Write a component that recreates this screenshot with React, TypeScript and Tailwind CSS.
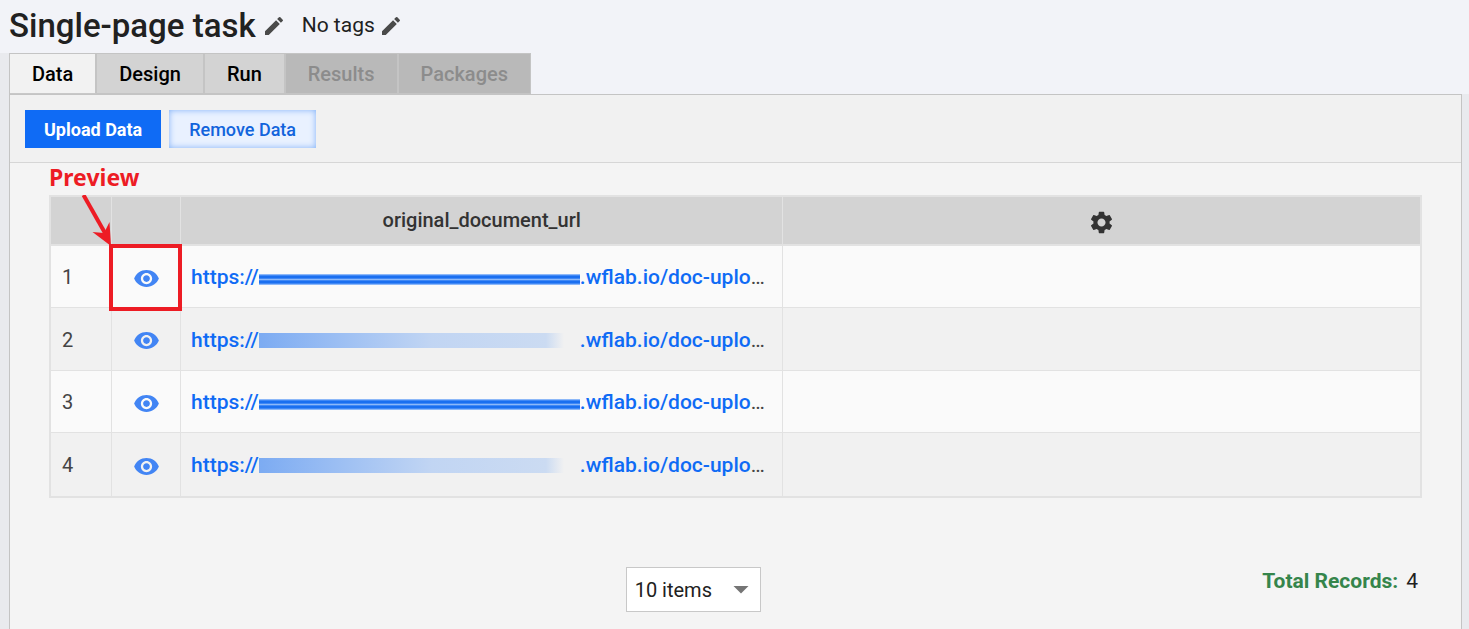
import { useState } from 'react';
import { MdArrowDropDown, MdEdit, MdSettings, MdVisibility } from 'react-icons/md';

interface TaskRecord {
  id: number;
  mask: 'striped' | 'faded';
}

const tabs = [
  { name: 'Data', enabled: true },
  { name: 'Design', enabled: true },
  { name: 'Run', enabled: true },
  { name: 'Results', enabled: false },
  { name: 'Packages', enabled: false },
];

const records: TaskRecord[] = [
  { id: 1, mask: 'striped' },
  { id: 2, mask: 'faded' },
  { id: 3, mask: 'striped' },
  { id: 4, mask: 'faded' },
];

function tabClass(name: string, enabled: boolean, active: string) {
  if (!enabled) return 'bg-[#b9b9b9] text-[#8c8c8c] border-b border-b-[#c4c4c4]';
  if (name === active) return 'bg-[#f2f2f2] text-black border-b border-b-[#c8c8c8]';
  return 'bg-[#d3d3d3] text-black border-b border-b-[#c4c4c4]';
}

// Hides the private part of the host name
function Mask({ kind }: { kind: TaskRecord['mask'] }) {
  if (kind === 'striped') {
    return (
      <span className="mt-[3px] flex h-[11px] w-[321px] flex-col gap-px bg-[#8db8f8] py-px">
        <span className="h-[4px] border-y border-[#4088f5] bg-[#1a6ff0]" />
        <span className="h-[4px] border-y border-[#4088f5] bg-[#1a6ff0]" />
      </span>
    );
  }
  return (
    <span className="flex h-[15px] w-[321px]">
      <span className="w-[287px] bg-linear-to-r from-[#7cabf2] via-[#c1d5f3] via-60% to-[#cbdbf2]" />
      <span className="w-[18px] bg-linear-to-r from-[#cbdbf2] to-[#cbdbf200]" />
    </span>
  );
}

export default function App() {
  const [active, setActive] = useState('Data');
  const [pageSize, setPageSize] = useState('10');

  return (
    <div className="flex min-h-screen flex-col bg-[#e9eaee] font-[Roboto,sans-serif] text-xl text-[#212121]">
      {/* Task title */}
      <header className="flex h-[53px] items-center bg-[#f2f3f8] px-[9px] pb-[2px]">
        <h1 className="text-[33px] leading-10 font-medium">Single-page task</h1>
        <button aria-label="Edit name" className="ml-[6px] text-[#4a4a4a]">
          <MdEdit size={24} />
        </button>
        <span className="ml-4 text-[21px]">No tags</span>
        <button aria-label="Edit tags" className="ml-1 text-[#4a4a4a]">
          <MdEdit size={24} />
        </button>
      </header>

      <nav className="ml-[9px] flex h-[41px] bg-[#f2f3f8]">
        <div className="flex divide-x-2 divide-[#c4c4c4] border-x border-t border-[#c4c4c4]">
          {tabs.map((tab) => (
            <button
              key={tab.name}
              disabled={!tab.enabled}
              onClick={() => setActive(tab.name)}
              className={`px-[22px] font-medium ${tabClass(tab.name, tab.enabled, active)}`}
            >
              {tab.name}
            </button>
          ))}
        </div>
      </nav>

      <main className="mr-[7px] ml-[9px] flex-1 border-x border-t border-[#c4c4c4] bg-[#f4f4f4]">
        <div className="flex gap-2 border-b border-[#d6d6d6] bg-[#f1f1f1] px-[15px] pt-[15px] pb-[14px] text-lg leading-9">
          <button className="bg-[#0f6bf5] px-[19px] pt-[2px] font-bold text-white">Upload Data</button>
          <button className="bg-[#e9f1ff] px-5 pt-[2px] font-medium text-[#1264dc] shadow-[inset_0_0_6px_#7fb0f8]">
            Remove Data
          </button>
        </div>

        {/* Records */}
        <div className="relative px-[39px] pt-8">
          <table className="w-full table-fixed border-separate border-spacing-0 border-2 border-[#e2e2e2]">
            <thead>
              <tr className="h-[49px] bg-[#d3d3d3] text-[#333]">
                <th className="w-[61px] border-r border-b-2 border-[#e2e2e2]" />
                <th className="w-[69px] border-r border-b-2 border-[#e2e2e2]" />
                <th className="w-[44%] border-r border-b-2 border-[#e2e2e2] pb-[2px] font-medium">
                  original_document_url
                </th>
                <th className="border-b-2 border-[#e2e2e2] pt-1">
                  <button aria-label="Column settings" className="mx-auto block">
                    <MdSettings size={27} />
                  </button>
                </th>
              </tr>
            </thead>
            <tbody>
              {records.map((record) => (
                <tr
                  key={record.id}
                  className="h-[62px] odd:bg-[#fafafa] even:h-[63px] even:bg-[#f1f1f1] [&:not(:last-child)>td]:border-b"
                >
                  <td className="border-r border-[#e2e2e2] pt-px pl-[11px] text-[#444]">{record.id}</td>
                  <td className="relative border-r border-[#e2e2e2] pt-[3px]">
                    <button aria-label="Preview document" className="mx-auto block text-[#4285f4]">
                      <MdVisibility size={27} />
                    </button>
                    {record.id === 1 && (
                      <span className="pointer-events-none absolute -top-[2px] -right-[2px] -bottom-[4px] -left-[3px] z-10 border-4 border-[#ed1c24]" />
                    )}
                  </td>
                  <td className="border-r border-[#e2e2e2] pt-[3px] pl-[10px] text-[21px] text-[#444]">
                    <div className="flex items-center whitespace-nowrap">
                      <a href="#" className="flex items-center font-medium text-[#0f6bf5]">
                        https://
                        <Mask kind={record.mask} />
                        .wflab.io/doc-uplo
                      </a>
                      …
                    </div>
                  </td>
                  <td className="border-[#e2e2e2]" />
                </tr>
              ))}
            </tbody>
          </table>

          {/* Callout */}
          <span className="absolute -top-[2px] left-[39px] font-['Noto_Sans',sans-serif] text-[23px] leading-8 font-bold text-[#ed1c24]">
            Preview
          </span>
          <svg className="absolute top-8 left-[70px]" width="34" height="52" viewBox="0 0 34 52" fill="#ed1c24">
            <path d="M3.500 0L25 38" stroke="#ed1c24" strokeWidth="4" />
            <path d="M31 51L12.500 37L24 38L29.500 27Z" />
          </svg>
        </div>

        <footer className="flex items-start px-[39px] pt-[69px] pb-4">
          <div className="relative ml-[42%]">
            <select
              aria-label="Items per page"
              value={pageSize}
              onChange={(e) => setPageSize(e.target.value)}
              className="h-[45px] w-[135px] appearance-none border border-[#c8c8c8] bg-white pl-2"
            >
              <option value="10">10 items</option>
              <option value="25">25 items</option>
              <option value="50">50 items</option>
            </select>
            <MdArrowDropDown size={36} className="pointer-events-none absolute top-1 right-[2px] text-[#757575]" />
          </div>
          <p className="mr-1 ml-auto text-[21px] leading-7">
            <span className="mr-2 font-bold text-[#35854b]">Total Records:</span>
            {records.length}
          </p>
        </footer>
      </main>
    </div>
  );
}
